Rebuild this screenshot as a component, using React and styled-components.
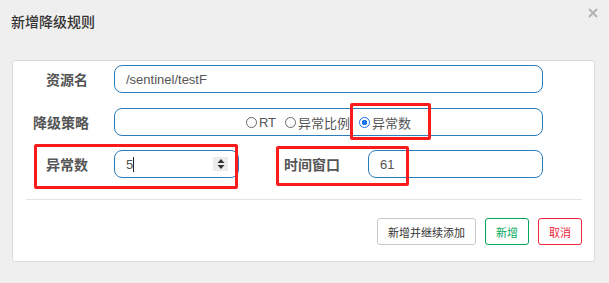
import React from "react";
import styled, { createGlobalStyle } from "styled-components";

const GlobalStyle = createGlobalStyle`
  html, body {
    margin: 0;
    padding: 0;
    background: #efefef;
  }
  body {
    font-family: "Liberation Sans", "Noto Sans CJK SC", sans-serif;
    color: #333;
  }
`;

const radios = [
  { label: "RT", checked: false },
  { label: "异常比例", checked: false },
  { label: "异常数", checked: true },
];

const App = () => {
  return (
    <>
      <GlobalStyle />
      <Page>
        <Header>
          <Title>新增降级规则</Title>
          <Close aria-label="close">
            <svg viewBox="0 0 10 10" width="10" height="10">
              <path d="M1 1 L9 9 M9 1 L1 9" stroke="#b3b3b3" strokeWidth="2" />
            </svg>
          </Close>
        </Header>
        <Card>
          <Form>
            <Row>
              <Label>资源名</Label>
              <Field>/sentinel/testF</Field>
            </Row>
            <Row>
              <Label>降级策略</Label>
              <RadioField>
                {radios.map((r) => (
                  <RadioItem key={r.label}>
                    <Circle $checked={r.checked} />
                    {r.label}
                  </RadioItem>
                ))}
              </RadioField>
            </Row>
            <SplitRow>
              <Label>异常数</Label>
              <Field>
                <span>
                  5<Caret />
                </span>
                <Spinner>
                  <svg viewBox="0 0 8 12" width="8" height="12">
                    <path d="M4 1 L7.5 5 L0.5 5 Z M4 11 L7.5 7 L0.5 7 Z" fill="#333" />
                  </svg>
                </Spinner>
              </Field>
              <Label>时间窗口</Label>
              <Field>61</Field>
            </SplitRow>
          </Form>
          <Divider />
          <Footer>
            <Button>新增并继续添加</Button>
            <Button $tone="#00a85a">新增</Button>
            <Button $tone="#f0243b">取消</Button>
          </Footer>
          <Mark style={{ left: 337, top: 42, width: 81, height: 37 }} />
          <Mark style={{ left: 21, top: 83, width: 204, height: 45 }} />
          <Mark style={{ left: 263, top: 85, width: 133, height: 40 }} />
        </Card>
      </Page>
    </>
  );
};

export default App;

const Page = styled.div`
  width: 609px;
  height: 283px;
  background: #efefef;
  overflow: hidden;
`;
const Header = styled.header`
  height: 60px;
  box-sizing: border-box;
  padding: 13px 11px 0 11px;
  display: flex;
  justify-content: space-between;
  align-items: flex-start;
`;
const Title = styled.h4`
  margin: 0;
  font-size: 14px;
  line-height: 18px;
  font-weight: 500;
  color: #333;
`;
const Close = styled.div`
  margin-top: -5px;
  width: 10px;
  height: 10px;
  display: flex;
`;
const Card = styled.section`
  position: relative;
  margin: 0 14px 0 12px;
  height: 202px;
  box-sizing: border-box;
  background: #fff;
  border: 1px solid #dcdcdc;
  border-radius: 3px;
  padding-top: 4px;
`;
const Form = styled.div`
  padding: 0 51px 0 20px;
  display: flex;
  flex-direction: column;
  gap: 15px;
  & > :last-child {
    margin-top: -1px;
  }
`;
const Row = styled.div`
  display: grid;
  grid-template-columns: 55px 1fr;
  column-gap: 26px;
  align-items: center;
`;
const SplitRow = styled.div`
  display: grid;
  grid-template-columns: 55px 125px 75px 1fr;
  column-gap: 26px;
  align-items: center;
  & > :nth-child(4) {
    margin-left: 2px;
  }
`;
const Label = styled.label`
  text-align: right;
  font-size: 14px;
  font-weight: bold;
  color: #555;
  white-space: nowrap;
`;
const Field = styled.div`
  height: 28px;
  box-sizing: border-box;
  border: 1px solid #2b7cb9;
  border-radius: 8px;
  padding: 0 6px 0 11px;
  display: flex;
  align-items: center;
  justify-content: space-between;
  font-size: 13px;
  color: #555;
`;
const Caret = styled.span`
  display: inline-block;
  width: 1px;
  height: 15px;
  background: #222;
  vertical-align: -3px;
`;
const Spinner = styled.span`
  width: 15px;
  height: 14px;
  background: #ececec;
  display: flex;
  align-items: center;
  justify-content: center;
  margin-right: 4px;
`;
const RadioField = styled(Field)`
  justify-content: center;
  gap: 9px;
  padding-left: 6px;
`;
const RadioItem = styled.span`
  display: flex;
  align-items: center;
  gap: 2px;
  font-size: 13px;
  color: #555;
`;
const Circle = styled.span`
  width: 11px;
  height: 11px;
  box-sizing: border-box;
  border-radius: 50%;
  border: 1px solid ${(p) => (p.$checked ? "#1a73e8" : "#666")};
  background: ${(p) => (p.$checked ? "radial-gradient(circle, #1a73e8 2.5px, #fff 3px)" : "#fff")};
`;
const Divider = styled.hr`
  margin: 21px 12px 0 13px;
  border: 0;
  border-top: 1px solid #e3e3e3;
`;
const Footer = styled.div`
  display: flex;
  justify-content: flex-end;
  gap: 9px;
  padding: 18px 12px 0 0;
`;
const Button = styled.button`
  height: 27px;
  padding: 0 10px;
  background: #fff;
  border: 1px solid ${(p) => p.$tone || "#c8c8c8"};
  color: ${(p) => p.$tone || "#333"};
  border-radius: 3px;
  font-family: "Liberation Sans", "Noto Sans CJK SC", sans-serif;
  font-size: 11px;
  cursor: pointer;
`;
const Mark = styled.div`
  position: absolute;
  box-sizing: border-box;
  border: 3px solid #fa1c1c;
  border-radius: 2px;
  pointer-events: none;
`;
